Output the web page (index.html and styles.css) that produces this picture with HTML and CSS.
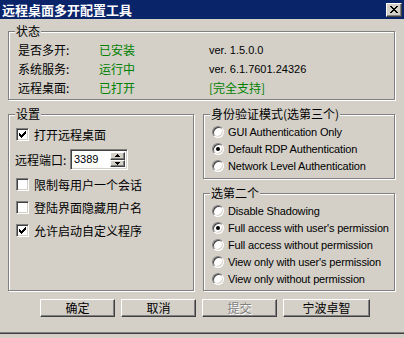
FILE: index.html
```html
<!DOCTYPE html>
<html lang="zh">
<head>
<meta charset="utf-8">
<title>远程桌面多开配置工具</title>
<link rel="stylesheet" href="styles.css">
</head>
<body>
<div class="window">
  <div class="titlebar">
    <span class="title">远程桌面多开配置工具</span>
    <span class="close"><svg width="8" height="7" viewBox="0 0 8 7" shape-rendering="crispEdges"><path d="M0 0h2v1h-2zM6 0h2v1h-2zM1 1h2v1h-2zM5 1h2v1h-2zM2 2h4v1h-4zM3 3h2v1h-2zM2 4h4v1h-4zM1 5h2v1h-2zM5 5h2v1h-2zM0 6h2v1h-2zM6 6h2v1h-2z" fill="#000"/></svg></span>
  </div>

  <div class="group status">
    <span class="legend">状态</span>
    <div class="status-grid">
      <span>是否多开:</span><span class="ok">已安装</span><span class="latin">ver. 1.5.0.0</span>
      <span>系统服务:</span><span class="ok">运行中</span><span class="latin">ver. 6.1.7601.24326</span>
      <span>远程桌面:</span><span class="ok">已打开</span><span class="ok">[完全支持]</span>
    </div>
  </div>

  <div class="columns">
    <div class="group settings">
      <span class="legend">设置</span>
      <div class="check"><span class="box"><svg width="7" height="7" viewBox="0 0 7 7" shape-rendering="crispEdges"><path d="M6 0h1v3h-1zM5 1h1v3h-1zM4 2h1v3h-1zM0 2h1v3h-1zM1 3h1v3h-1zM3 3h1v3h-1zM2 4h1v3h-1z" fill="#000"/></svg></span>打开远程桌面</div>
      <div class="port">
        <span class="port-label">远程端口:</span>
        <span class="spin">
          <span class="spin-text">3389</span>
          <span class="spin-btns">
            <span class="spin-btn"><svg width="5" height="3" viewBox="0 0 5 3" shape-rendering="crispEdges"><path d="M2 0h1v1h-1zM1 1h3v1h-3zM0 2h5v1h-5z" fill="#000"/></svg></span>
            <span class="spin-btn"><svg width="5" height="3" viewBox="0 0 5 3" shape-rendering="crispEdges"><path d="M0 0h5v1h-5zM1 1h3v1h-3zM2 2h1v1h-1z" fill="#000"/></svg></span>
          </span>
        </span>
      </div>
      <div class="check"><span class="box"></span>限制每用户一个会话</div>
      <div class="check"><span class="box"></span>登陆界面隐藏用户名</div>
      <div class="check"><span class="box"><svg width="7" height="7" viewBox="0 0 7 7" shape-rendering="crispEdges"><path d="M6 0h1v3h-1zM5 1h1v3h-1zM4 2h1v3h-1zM0 2h1v3h-1zM1 3h1v3h-1zM3 3h1v3h-1zM2 4h1v3h-1z" fill="#000"/></svg></span>允许启动自定义程序</div>
    </div>

    <div class="right">
      <div class="group auth">
        <span class="legend">身份验证模式(选第三个)</span>
        <div class="radio-row"><span class="radio"></span><span class="latin opt">GUI Authentication Only</span></div>
        <div class="radio-row"><span class="radio on"></span><span class="latin opt">Default RDP Authentication</span></div>
        <div class="radio-row"><span class="radio"></span><span class="latin opt">Network Level Authentication</span></div>
      </div>
      <div class="group shadowing">
        <span class="legend">选第二个</span>
        <div class="radio-row"><span class="radio"></span><span class="latin opt">Disable Shadowing</span></div>
        <div class="radio-row"><span class="radio on"></span><span class="latin opt">Full access with user's permission</span></div>
        <div class="radio-row"><span class="radio"></span><span class="latin opt">Full access without permission</span></div>
        <div class="radio-row"><span class="radio"></span><span class="latin opt">View only with user's permission</span></div>
        <div class="radio-row"><span class="radio"></span><span class="latin opt">View only without permission</span></div>
      </div>
    </div>
  </div>

  <div class="buttons">
    <span class="btn">确定</span>
    <span class="btn">取消</span>
    <span class="btn disabled">提交</span>
    <span class="btn wide">宁波卓智</span>
  </div>

  <div class="frame-bottom"></div>
</div>
</body>
</html>
```

FILE: styles.css
```css
* { box-sizing: border-box; }

body {
  margin: 0;
  background: #d4d0c8;
  font-family: "Noto Sans CJK SC", "Liberation Sans", sans-serif;
  font-size: 12px;
  color: #000;
}

.window {
  width: 404px;
  height: 338px;
  background: #d4d0c8;
  display: flex;
  flex-direction: column;
  overflow: hidden;
}

.titlebar {
  flex: none;
  height: 19px;
  background: #0a246a;
  display: flex;
  align-items: center;
  justify-content: space-between;
  padding: 0 2px 0 2px;
}

.title {
  color: #fff;
  font-weight: bold;
  font-size: 13px;
  line-height: 19px;
}

.close {
  width: 16px;
  height: 14px;
  background: #d4d0c8;
  border: 1px solid;
  border-color: #fff #404040 #404040 #fff;
  box-shadow: inset -1px -1px #808080;
  display: flex;
  align-items: center;
  justify-content: center;
}

.group {
  position: relative;
  border: 1px solid #808080;
  box-shadow: inset 1px 1px #fff, 1px 1px #fff;
}

.legend {
  position: absolute;
  top: -8px;
  left: 6px;
  padding: 0 1px;
  background: #d4d0c8;
  line-height: 14px;
  font-size: 12px;
}

.latin {
  font-family: "Liberation Sans", Arial, sans-serif;
  font-size: 11px;
}

.opt { letter-spacing: -0.15px; }

.ok { color: #008000; }

.status {
  flex: none;
  margin: 12px 0 0 8px;
  width: 387px;
  height: 69px;
  padding: 8px 0 0 9px;
}

.status-grid {
  display: grid;
  grid-template-columns: 81px 110px auto;
  grid-auto-rows: 19px;
  align-items: center;
  line-height: 14px;
}

.columns {
  flex: none;
  display: grid;
  grid-template-columns: 186px 192px;
  column-gap: 9px;
  margin: 14px 0 0 8px;
}

.settings {
  height: 177px;
  padding: 11px 0 0 7px;
  display: flex;
  flex-direction: column;
  gap: 6px;
}

.check {
  height: 17px;
  display: flex;
  align-items: center;
  gap: 5px;
  line-height: 14px;
}

.box {
  flex: none;
  width: 13px;
  height: 13px;
  background: #fff;
  border: 1px solid;
  border-color: #808080 #fff #fff #808080;
  box-shadow: inset 1px 1px #404040, inset -1px -1px #d4d0c8;
  display: flex;
  align-items: center;
  justify-content: center;
}

.port {
  height: 21px;
  display: flex;
  align-items: center;
  margin-left: -1px;
}

.port-label {
  width: 55px;
  line-height: 14px;
}

.spin {
  width: 58px;
  height: 21px;
  background: #fff;
  border: 1px solid;
  border-color: #808080 #fff #fff #808080;
  box-shadow: inset 1px 1px #404040, inset -1px -1px #d4d0c8;
  padding: 2px;
  display: flex;
  align-items: stretch;
}

.spin-text {
  flex: 1;
  font-family: "Liberation Sans", Arial, sans-serif;
  font-size: 11px;
  line-height: 15px;
  padding-left: 1px;
}

.spin-btns {
  width: 15px;
  display: flex;
  flex-direction: column;
}

.spin-btn {
  flex: 1;
  background: #d4d0c8;
  border: 1px solid;
  border-color: #fff #404040 #404040 #fff;
  box-shadow: inset -1px -1px #808080;
  display: flex;
  align-items: center;
  justify-content: center;
}

.right {
  display: flex;
  flex-direction: column;
  gap: 14px;
}

.auth {
  height: 65px;
  padding: 8px 0 0 8px;
}

.shadowing {
  height: 98px;
  padding: 8px 0 0 8px;
}

.radio-row {
  height: 17px;
  display: flex;
  align-items: center;
  gap: 4px;
}

.radio {
  flex: none;
  width: 12px;
  height: 12px;
  border-radius: 50%;
  background: #fff;
  border: 1px solid;
  border-color: #808080 #fff #fff #808080;
  box-shadow: inset 1px 1px #404040, inset -1px -1px #d4d0c8;
  display: flex;
  align-items: center;
  justify-content: center;
}

.radio.on::after {
  content: "";
  width: 4px;
  height: 4px;
  border-radius: 50%;
  background: #000;
}

.buttons {
  flex: none;
  display: flex;
  gap: 6px;
  margin: 8px 0 0 40px;
}

.btn {
  width: 75px;
  height: 18px;
  border: 1px solid;
  border-color: #fff #404040 #404040 #fff;
  box-shadow: inset -1px -1px #808080;
  display: flex;
  align-items: center;
  justify-content: center;
  line-height: 14px;
}

.btn.wide { width: 87px; }

.btn.disabled {
  color: #808080;
  text-shadow: 1px 1px #fff;
}

.frame-bottom {
  margin-top: auto;
  height: 6px;
  border-top: 1px solid #808080;
  box-shadow: inset 0 1px #404040;
}
```
